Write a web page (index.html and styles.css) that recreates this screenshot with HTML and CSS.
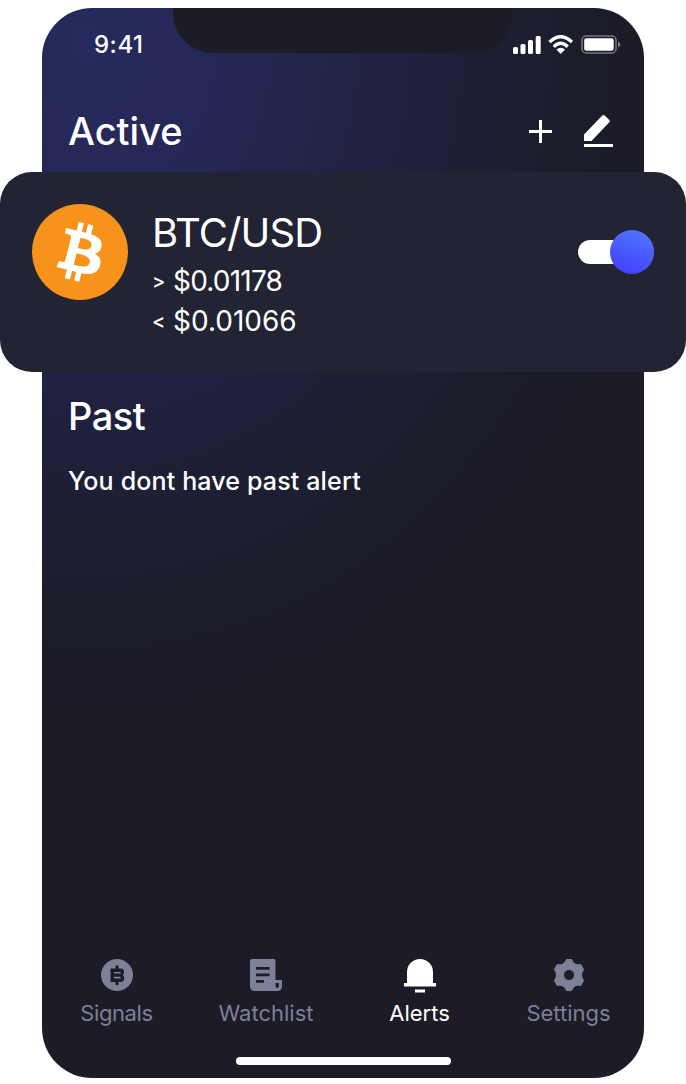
FILE: index.html
```html
<!DOCTYPE html>
<html lang="en">
<head>
<meta charset="utf-8">
<title>Alerts</title>
<link rel="stylesheet" href="styles.css">
</head>
<body>
<div class="phone">
  <div class="notch"></div>
  <header class="status">
    <span class="time">9:41</span>
    <svg class="indicators" width="108" height="20" viewBox="0 0 108 20" fill="#fff">
      <rect x="0" y="12" width="5" height="7" rx="1.5"/><rect x="7.5" y="9" width="5" height="10" rx="1.5"/><rect x="15" y="5" width="5" height="14" rx="1.5"/><rect x="22.700" y="1" width="5" height="18" rx="1.500"/>
      <g fill="none" stroke="#fff" stroke-width="3.300"><path d="M36.500 7Q47.700-3.500 59 7"/><path d="M40.700 11.700Q47.700 5 54.700 11.700"/></g>
      <path d="M43.500 14.500Q47.700 11 52 14.500L47.700 19Z"/>
      <rect x="69" y="1" width="34" height="17" rx="4" fill="none" stroke="#777782" stroke-width="1.500"/>
      <rect x="71.200" y="3.200" width="29.500" height="12.500" rx="2"/>
      <path d="M105 6.500q2.500 1 2.500 3t-2.500 3z" fill="#777782"/>
    </svg>
  </header>
  <section class="heading">
    <h1 class="title active-title">Active</h1>
    <svg width="86" height="36" viewBox="0 0 86 36" fill="#fff">
      <path d="M11 7h3v10h10v3H14v10h-3V20H1v-3h10z"/>
      <path d="M56 21.500L74.300 2.500Q75.500 1.300 76.700 2.500L81.300 7Q82.400 8.200 81.300 9.300L63.500 28H56zM56 31h29v3H56z"/>
    </svg>
  </section>
  <section class="alert-card">
    <svg class="coin" width="96" height="96" viewBox="0 0 32 32"><circle cx="16" cy="16" r="16" fill="#f7931a"/><path fill="#fff" d="M23.189 14.020c.314-2.096-1.283-3.223-3.465-3.975l.708-2.840-1.728-.43-.69 2.765c-.454-.114-.920-.220-1.385-.326l.695-2.783L15.596 6l-.708 2.839c-.376-.086-.746-.170-1.104-.260l.002-.009-2.384-.595-.460 1.846s1.283.294 1.256.312c.700.175.826.638.805 1.006l-.806 3.235c.048.012.110.030.180.057l-.183-.045-1.130 4.532c-.086.212-.303.531-.793.410.018.025-1.256-.313-1.256-.313l-.858 1.978 2.250.561c.418.105.828.215 1.231.318l-.715 2.872 1.727.430.708-2.840c.472.127.930.245 1.378.357l-.706 2.828 1.728.430.715-2.866c2.948.558 5.164.333 6.097-2.333.752-2.146-.037-3.385-1.588-4.192 1.130-.260 1.980-1.003 2.207-2.538zm-3.950 5.538c-.533 2.147-4.148.986-5.320.695l.950-3.805c1.172.293 4.929.872 4.370 3.110zm.535-5.569c-.487 1.953-3.495.960-4.470.717l.860-3.450c.975.243 4.118.696 3.610 2.733z"/></svg>
    <div class="prices"><div class="pair">BTC/USD</div><div class="price price-above"><span class="sign">&gt;</span>$0.01178</div><div class="price price-below"><span class="sign">&lt;</span>$0.01066</div></div>
    <div class="toggle"><span class="track"></span><span class="knob"></span></div>
  </section>
  <section class="past"><h2 class="title past-title">Past</h2><p class="empty">You dont have past alert</p></section>
  <nav class="tabs">
    <div class="tab signals"><svg width="36" height="36" viewBox="0 0 36 36"><circle cx="18" cy="18" r="16" fill="#7e7f98"/><path fill="#1c1c27" fill-rule="evenodd" d="M11.500 11.500H16.500V8.500h3v3h2q3.500 0 3.500 3v1.800L24 18l1 1.700V22q0 3-3.500 3h-2v3h-3v-3h-5zM15 15v1.600h6.500V15zM15 19.800v1.600h6.500v-1.600z"/></svg><span>Signals</span></div>
    <div class="tab watchlist"><svg width="36" height="36" viewBox="0 0 36 36"><path fill="#7e7f98" fill-rule="evenodd" d="M4 2h22q1.500 0 1.500 1.500V23H34v6q0 5-5 5H7q-5 0-5-5V4q0-2 2-2zm4 8v2.800h13.500V10zm0 6.500v2.800h13.500v-2.800zM8 23v2.800h8V23zm19.500 3V29q0 2 1.700 2t1.700-2v-3z"/></svg><span>Watchlist</span></div>
    <div class="tab alerts"><svg width="36" height="36" viewBox="0 0 36 36" fill="#fff"><path d="M5 26V15a13 13 0 0 1 26 0v11h3v3.500H2V26zM13 32.500h10v3H13z"/></svg><span>Alerts</span></div>
    <div class="tab settings"><svg width="36" height="36" viewBox="0 0 36 36"><path fill="#7e7f98" stroke="#7e7f98" stroke-linejoin="round" fill-rule="evenodd" d="M15.500 2.500h5Q23.200 9 29.900 7.600L32.600 12.600Q28.400 18 32.600 23.400L29.900 28.400Q23.200 27 20.500 33.500H15.500Q12.800 27 6.100 28.400L3.400 23.400Q7.600 18 3.400 12.600L6.100 7.600Q12.800 9 15.500 2.500zM18 12.500a5.500 5.500 0 1 0 0 11 5.500 5.500 0 0 0 0-11z"/></svg><span>Settings</span></div>
  </nav>
  <div class="home-bar"></div>
</div>
</body>
</html>
```
FILE: styles.css
```css
* { box-sizing: border-box; }
body { margin: 0; width: 686px; height: 1084px; padding: 8px 42px 6px; overflow: hidden; background: #fff; color: #fff; font-family: Inter, "Liberation Sans", sans-serif; }
.phone { position: relative; width: 602px; height: 1070px; border-radius: 50px; background: radial-gradient(ellipse 590px 680px at 45px 35px, #262a5c 0%, #252856 23%, #20213f 52%, #1c1d2b 82%, #1c1b26 100%); display: flex; flex-direction: column; }
.notch { position: absolute; left: 131px; top: 0; width: 340px; height: 45px; border-radius: 0 0 40px 40px; background: #1c1b26; }
.status { height: 90px; padding: 23px 23px 0 52px; display: flex; justify-content: space-between; align-items: flex-start; }
.time { font-size: 24px; line-height: 28px; font-weight: 500; letter-spacing: .5px; }
.indicators { margin-top: 4px; }
.heading { height: 74px; padding: 11px 30px 0 26px; display: flex; justify-content: space-between; align-items: flex-start; }
.heading svg { margin-top: 4px; }
.title { margin: 0; font-size: 38px; line-height: 44px; font-weight: 500; }
.past-title { letter-spacing: -.5px; }
.alert-card { width: 686px; height: 200px; flex: none; margin-left: -42px; padding: 32px; border-radius: 32px; background: #232433; display: flex; }
.coin { flex: none; }
.prices { padding: 6px 0 0 24px; flex: 1; white-space: nowrap; }
.pair { font-size: 40px; line-height: 46px; letter-spacing: -.9px; }
.price { display: flex; font-size: 28px; line-height: 40px; padding-top: 5px; height: 40px; letter-spacing: -.8px; }
.price-below { letter-spacing: 0; }
.sign { width: 21px; font-size: 20px; font-weight: 500; }
.toggle { display: flex; align-items: center; width: 76px; height: 44px; margin-top: 26px; }
.track { width: 58px; height: 24px; border-radius: 12px; background: #fff; }
.knob { width: 44px; height: 44px; flex: none; border-radius: 50%; margin-left: -26px; background: linear-gradient(20deg, #4340ff 10%, #5077ff 95%); }
.past { padding: 22px 26px; height: 585px; flex: none; }
.empty { margin: 28px 0 0; font-size: 25px; line-height: 30px; font-weight: 500; letter-spacing: .15px; white-space: nowrap; }
.tabs { display: grid; grid-template-columns: 149px 150px 157px 141px; height: 92px; flex: none; }
.tab { display: flex; flex-direction: column; align-items: center; font-size: 22px; line-height: 28px; gap: 6px; color: #7e7f98; white-space: nowrap; }
.signals { letter-spacing: -.4px; }
.alerts { color: #fff; }
.home-bar { width: 215px; height: 8px; border-radius: 4px; background: #fff; margin: 8px 0 0 194px; flex: none; }
```
